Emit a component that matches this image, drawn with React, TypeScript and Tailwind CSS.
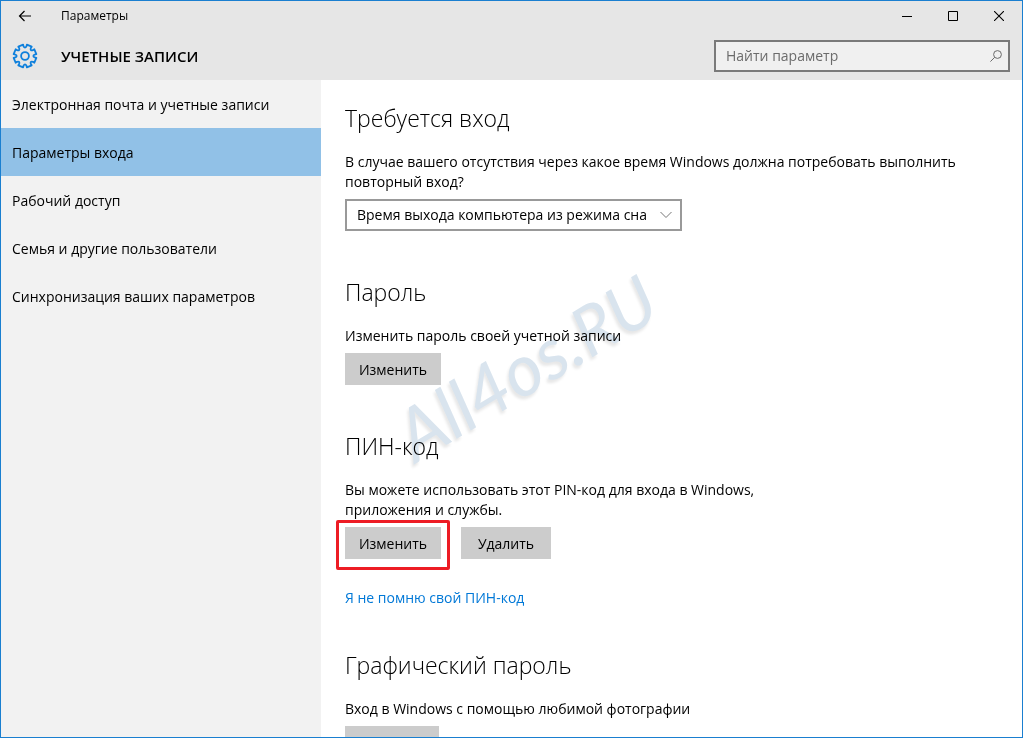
import type { ReactNode } from 'react'

const navItems = [
  'Электронная почта и учетные записи',
  'Параметры входа',
  'Рабочий доступ',
  'Семья и другие пользователи',
  'Синхронизация ваших параметров',
]

interface SectionProps {
  title: string
  text: string
  narrow?: boolean
  children: ReactNode
}

function Section({ title, text, narrow, children }: SectionProps) {
  return (
    <section className="shrink-0">
      <h2 className="text-[23px] font-light leading-[30px]">{title}</h2>
      <p className={`mt-[19px] mb-[7px] leading-5 ${narrow ? 'max-w-[440px]' : 'max-w-[640px]'}`}>{text}</p>
      {children}
    </section>
  )
}

function GrayButton({ label, className }: { label: string; className: string }) {
  return (
    <button type="button" className={`h-8 bg-[#cccccc] pt-0.5 text-center hover:bg-[#bdbdbd] ${className}`}>
      {label}
    </button>
  )
}

function GearIcon() {
  const teeth = 8
  const step = (Math.PI * 2) / teeth
  const at = (r: number, a: number) => `${(13 + r * Math.cos(a)).toFixed(2)} ${(13 + r * Math.sin(a)).toFixed(2)}`
  let d = ''
  for (let i = 0; i < teeth; i++) {
    const a = i * step - Math.PI / 2 + step / 2
    d += `${i === 0 ? 'M' : 'L'}${at(9.8, a - 0.24)} L${at(11.5, a - 0.23)} L${at(11.5, a + 0.23)} L${at(9.8, a + 0.24)} `
    d += `Q${at(7, a + step / 2)} ${at(9.8, a + step - 0.24)} `
  }
  return (
    <svg width="26" height="26" viewBox="0 0 26 26" fill="none" stroke="#0f80dc" strokeWidth="1.8" strokeLinejoin="round">
      <path d={d + 'Z'} />
      <circle cx="13" cy="13" r="3.9" />
    </svg>
  )
}

export default function App() {
  return (
    <div className="flex h-screen flex-col overflow-hidden border border-[#1a7fd0] bg-white font-['Open_Sans','Noto_Sans',sans-serif] text-sm text-black">
      <header className="shrink-0 bg-[#e6e6e6]">
        <div className="flex h-[30px] items-center">
          <button type="button" aria-label="Назад" className="flex h-full w-12 items-center justify-center">
            <svg width="14" height="12" viewBox="0 0 14 12" fill="none" stroke="#000" strokeWidth="1.2">
              <path d="M13 6H1.5M6.5 1l-5 5 5 5" />
            </svg>
          </button>
          <span className="ml-3 flex-1 text-xs">Параметры</span>
          <button type="button" aria-label="Свернуть" className="flex h-full w-[46px] items-center justify-center">
            <svg width="10" height="10" viewBox="0 0 10 10" stroke="#000">
              <path d="M0 5.5h10" />
            </svg>
          </button>
          <button type="button" aria-label="Развернуть" className="flex h-full w-[46px] items-center justify-center">
            <svg width="10" height="10" viewBox="0 0 10 10" fill="none" stroke="#000">
              <path d="M.5.5h9v9h-9z" />
            </svg>
          </button>
          <button type="button" aria-label="Закрыть" className="flex h-full w-[46px] items-center justify-center">
            <svg width="10" height="10" viewBox="0 0 10 10" stroke="#000" strokeWidth="1.1">
              <path d="M0 0l10 10M10 0L0 10" />
            </svg>
          </button>
        </div>
        <div className="flex h-[49px] items-center pr-3 pl-[11px]">
          <GearIcon />
          <h1 className="ml-[23px] flex-1 pt-0.5 text-[15px] font-semibold">УЧЕТНЫЕ ЗАПИСИ</h1>
          <label className="flex h-8 w-[296px] items-center border-2 border-[#7a7a7a] bg-[#f0f0f0] pr-1.5 pl-2.5">
            <input
              type="search"
              aria-label="Найти параметр"
              placeholder="Найти параметр"
              className="min-w-0 flex-1 bg-transparent outline-none placeholder:text-[#6b6b6b]"
            />
            <svg width="12" height="12" viewBox="0 0 12 12" fill="none" stroke="#6b6b6b">
              <circle cx="7.5" cy="4.5" r="3.9" />
              <path d="M4.7 7.3L.4 11.6" />
            </svg>
          </label>
        </div>
      </header>

      <div className="flex min-h-0 flex-1">
        <nav className="w-80 shrink-0 bg-[#f2f2f2]">
          {navItems.map((item, i) => (
            <a
              key={item}
              href="#"
              className={`flex h-12 items-center px-[11px] pt-0.5 ${i === 1 ? 'bg-[#91c1e7]' : ''}`}
            >
              {item}
            </a>
          ))}
        </nav>

        <main className="relative flex min-w-0 flex-1 flex-col gap-[46px] overflow-hidden px-6 pt-[23px]">
          <Section
            title="Требуется вход"
            text="В случае вашего отсутствия через какое время Windows должна потребовать выполнить повторный вход?"
          >
            <div className="relative w-[337px]">
              <select
                aria-label="Требуется вход"
                className="h-8 w-full appearance-none border-2 border-[#999999] bg-white pr-7 pl-2.5"
              >
                <option>Время выхода компьютера из режима сна</option>
              </select>
              <svg
                className="pointer-events-none absolute top-3 right-2.5"
                width="12"
                height="8"
                viewBox="0 0 12 8"
                fill="none"
                stroke="#777"
              >
                <path d="M.5 1L6 6.5 11.5 1" />
              </svg>
            </div>
          </Section>

          <Section title="Пароль" text="Изменить пароль своей учетной записи">
            <GrayButton label="Изменить" className="w-24" />
          </Section>

          <Section title="ПИН-код" text="Вы можете использовать этот PIN-код для входа в Windows, приложения и службы." narrow>
            <div className="flex gap-5">
              <div className="relative">
                <GrayButton label="Изменить" className="w-24" />
                <span className="pointer-events-none absolute -top-[7px] -right-[9px] -bottom-[11px] -left-[9px] rounded-xs border-3 border-[#ed1c24]" />
              </div>
              <GrayButton label="Удалить" className="w-[90px]" />
            </div>
            <a href="#" className="mt-[31px] -mb-0.5 block leading-4 text-[#0078d7]">
              Я не помню свой ПИН-код
            </a>
          </Section>

          <Section title="Графический пароль" text="Вход в Windows с помощью любимой фотографии">
            <GrayButton label="Добавить" className="w-[94px]" />
          </Section>

          {/* Watermark */}
          <div className="pointer-events-none absolute top-[318px] left-[100px] origin-bottom-left -rotate-[31deg] font-['Lato'] text-7xl leading-[72px] whitespace-nowrap text-[#d9e4ee] italic mix-blend-multiply text-shadow-[-3px_2px_3px_#00000018]">
            All4os.<span className="text-[68px]">RU</span>
          </div>
        </main>
      </div>
    </div>
  )
}
